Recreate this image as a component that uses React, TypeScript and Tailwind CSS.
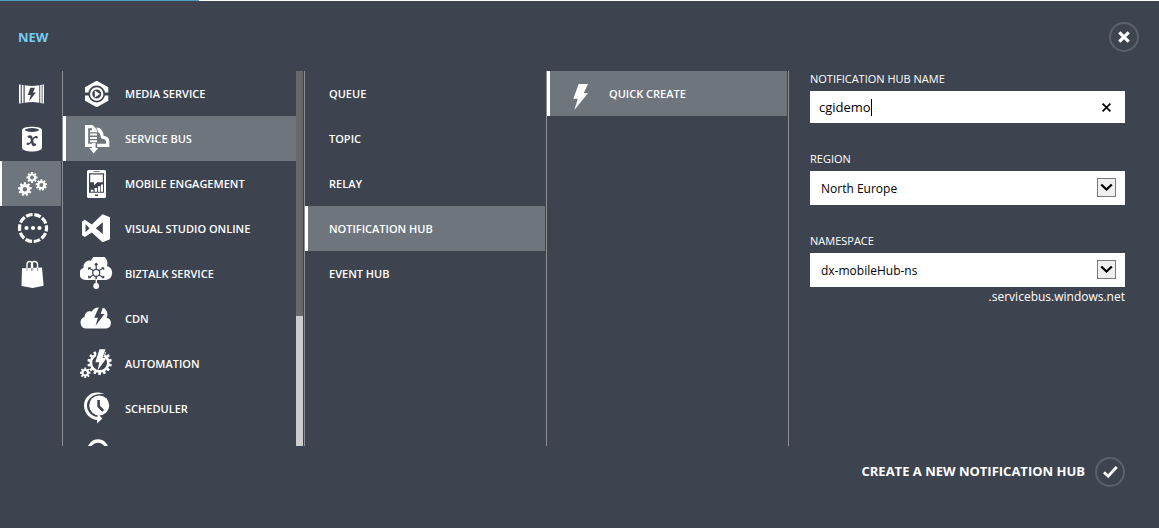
import React, { useRef, useState } from "react";

type IconProps = { children: React.ReactNode };

function ServiceIcon({ children }: IconProps) {
  return (
    <svg viewBox="0 0 33 33" className="h-[33px] w-[33px] shrink-0" fill="#fff" aria-hidden="true">
      {children}
    </svg>
  );
}

function gearPath(cx: number, cy: number, outer: number, inner: number, teeth: number, hole: number) {
  const pts: string[] = [];
  const step = (Math.PI * 2) / teeth;
  for (let i = 0; i < teeth; i++) {
    const a = i * step - Math.PI / 2;
    [
      [-0.32, inner],
      [-0.22, outer],
      [0.22, outer],
      [0.32, inner],
    ].forEach(([k, r]) => {
      pts.push(`${(cx + Math.cos(a + k * step) * r).toFixed(2)} ${(cy + Math.sin(a + k * step) * r).toFixed(2)}`);
    });
  }
  return `M${pts.join("L")}ZM${cx - hole} ${cy}a${hole} ${hole} 0 1 0 ${hole * 2} 0a${hole} ${hole} 0 1 0 ${-hole * 2} 0Z`;
}

const DARK = "#3e444f";

const mediaIcon = (
  <ServiceIcon>
    <path d="M5 15.500V10.200L16.200 4h1l11.100 6.200v5.300zM5 18.500v5.300L16.200 30h1l11.100-6.200v-5.300z" />
    <circle cx="16.700" cy="17" r="8.400" fill={DARK} />
    <circle cx="16.700" cy="17" r="5.600" fill="none" stroke="#fff" strokeWidth="2.200" />
    <path d="M14.800 13.500v7l5.200-3.500z" />
  </ServiceIcon>
);

const serviceBusIcon = (
  <ServiceIcon>
    <path d="M5 3h7.500l4 4v1.500H12V6.200H8.200v15.600H12V25H5z" />
    <path d="M10 8.300h7v2h-7zM10 11.600h7v2h-7zM10 14.900h7v2h-7zM10 18.200h7v2h-7zM12 21h3.600v5h2.600l-4.500 5.400L9.200 26H12z" />
    <path
      fillRule="evenodd"
      d="M16.500 5.500c4.400 0 6.500 3.200 7.200 8.300 3.500.8 5.600 2 5.600 5.400V25H17.200v-3.200h8.800v-2.300c0-1.800-1.600-2.300-5-3.200-.3-3.600-1.300-5.300-3-6.300z"
    />
  </ServiceIcon>
);

const mobileIcon = (
  <ServiceIcon>
    <path
      fillRule="evenodd"
      d="M8.500 3h16A1.500 1.500 0 0 1 26 4.500v25A1.500 1.500 0 0 1 24.500 31h-16A1.500 1.500 0 0 1 7 29.500v-25A1.500 1.500 0 0 1 8.500 3zM9 6.200v19.600h15V6.200zM13.500 4.200v.9h6v-.9zM15 27.600v1.500h3v-1.500z"
    />
    <path d="M10.200 7.400h12.600v7.900h-5.500l-3.300 3v-3h-3.800zM10.800 22.800h2.600v2h-2.600zM14.600 21h2.500v3.800h-2.500zM18 19.200h2.300v5.600H18zM21 17.600h2v7.200h-2z" />
  </ServiceIcon>
);

const visualStudioIcon = (
  <ServiceIcon>
    <path
      fillRule="evenodd"
      d="M22.500 2.300l7.500 3v22l-7.500 2.900-10.700-9.700L4.800 25 2 23.300V9.400l2.800-1.700 7 4.900zM22.800 10.300l-7 6 7 5.700zM5.500 12.300v8l4-4z"
    />
  </ServiceIcon>
);

const bizTalkIcon = (
  <ServiceIcon>
    <path d="M5.500 23A6.300 6.300 0 0 1 3.600 10.800 6 6 0 0 1 11 3.800 8.200 8.200 0 0 1 27 9 7.200 7.200 0 0 1 26 23z" />
    <circle cx="16.200" cy="15.800" r="3.500" fill="none" stroke={DARK} strokeWidth="1.300" />
    <path
      d="M16.200 12.300V7M13.300 13.600L9 11M19.100 13.600L23.400 11M13.300 18L9 20.500M19.100 18l4.300 2.500M14.800 8l1.400-1.600L17.600 8M8.600 12.800l.2-2 2 .1M23.800 12.800l-.2-2-2 .1M8.600 18.700l.2 2 2-.1M23.800 18.700l-.2 2-2-.1"
      stroke={DARK}
      strokeWidth="1.200"
      fill="none"
    />
    <path d="M16.200 20v3" stroke={DARK} strokeWidth="1.500" />
    <path d="M15.600 22h1.400v6h-1.400z" />
    <circle cx="16.200" cy="29" r="2.900" />
  </ServiceIcon>
);

const cdnIcon = (
  <ServiceIcon>
    <path d="M6.500 26.500A5.900 5.900 0 0 1 4.600 15a5.400 5.400 0 0 1 7.200-5.500A8 8 0 0 1 19 5.500l5.500.8a8.200 8.200 0 0 1 2.200 9.400A5.500 5.500 0 0 1 26 26.500z" />
    <path d="M19.300 4.500h3.800l-2.400 7.500h3.800L15.500 23.800l2.400-8h-3.800z" fill={DARK} />
  </ServiceIcon>
);

const automationIcon = (
  <ServiceIcon>
    <path fillRule="evenodd" d={gearPath(19.6, 15.7, 12.3, 9.9, 14, 7.4)} />
    <path fillRule="evenodd" d={gearPath(5.2, 25.8, 5.4, 3.8, 8, 1.7)} />
    <path d="M17.500 1h8.500l-2 8h-8z" fill={DARK} />
    <path d="M19.500 2.200h6l-3 8.600h4.300L17.500 23.600l1.800-8.400h-4z" />
  </ServiceIcon>
);

const schedulerIcon = (
  <ServiceIcon>
    <path d="M24.800 2.200C13-3 4 4.500 4 13.500c0 7.500 5.500 13.500 13.300 14.700L17 31.500l5.400-5-4.600-4.800-.3 3.300C11.500 24 7 19.500 7 13.500 7 6.500 13.500.5 24.800 2.200z" />
    <circle cx="19.200" cy="13.400" r="10" />
    <path d="M18.600 8v6.200l4.600 4.600" stroke={DARK} strokeWidth="2.600" fill="none" />
  </ServiceIcon>
);

const moreIcon = (
  <ServiceIcon>
    <circle cx="18" cy="13" r="9" fill="none" stroke="#fff" strokeWidth="3.400" />
  </ServiceIcon>
);

const services = [
  { label: "MEDIA SERVICE", icon: mediaIcon },
  { label: "SERVICE BUS", icon: serviceBusIcon },
  { label: "MOBILE ENGAGEMENT", icon: mobileIcon },
  { label: "VISUAL STUDIO ONLINE", icon: visualStudioIcon },
  { label: "BIZTALK SERVICE", icon: bizTalkIcon },
  { label: "CDN", icon: cdnIcon },
  { label: "AUTOMATION", icon: automationIcon },
  { label: "SCHEDULER", icon: schedulerIcon },
  { label: "", icon: moreIcon },
];

const messaging = ["QUEUE", "TOPIC", "RELAY", "NOTIFICATION HUB", "EVENT HUB"];

const categories = [
  {
    name: "Compute",
    icon: (
      <>
        <path d="M3 7.500h1.700v19H3zM5.800 7.800l1.700.2v18l-1.700.2zM8.700 8.200q7.300 1.400 14.600 0v17.600q-7.300-1.400-14.600 0zM24.200 8l1.500-.2v18.400l-1.500-.2zM26.500 7.500h1.500v19h-1.500z" />
        <path d="M14.300 10.800h4.700l-2 4.700h2.900l-6.800 8.700 1.600-6.200h-2.900z" fill={DARK} />
      </>
    ),
  },
  {
    name: "Data services",
    icon: (
      <>
        <path d="M6 8c0-4.500 20-4.500 20 0v17.800c0 5-20 5-20 0z" />
        <ellipse cx="16" cy="8" rx="7" ry="1.900" fill={DARK} />
        <path
          d="M12 15.300c2.400-1.700 3.400-.5 3.700 1.500l.9 4.800c.4 1.800 1.500 1.700 3 .2"
          fill="none"
          stroke={DARK}
          strokeWidth="2.400"
        />
        <path d="M21 14.800c-2.500-.8-3.800 1.800-5 3.900-1.200 2-2.400 4-4.700 3.300" fill="none" stroke={DARK} strokeWidth="1.400" />
        <circle cx="20.500" cy="15.300" r="1.200" fill={DARK} />
        <circle cx="11.800" cy="21.800" r="1.200" fill={DARK} />
      </>
    ),
  },
  {
    name: "App services",
    icon: (
      <>
        <path fillRule="evenodd" d={gearPath(16, 10.5, 5.6, 4.2, 8, 1.9)} />
        <path fillRule="evenodd" d={gearPath(25.4, 18, 5.8, 4.3, 9, 2)} />
        <path fillRule="evenodd" d={gearPath(8.9, 22.2, 7, 5.2, 9, 2.2)} />
      </>
    ),
  },
  {
    name: "Network services",
    icon: (
      <>
        <circle cx="17" cy="16" r="13.500" fill="none" stroke="#fff" strokeWidth="3.200" strokeDasharray="6.700 1.782" strokeDashoffset="3.300" />
        <circle cx="10.500" cy="16" r="2.100" />
        <circle cx="17" cy="16" r="2.100" />
        <circle cx="23.500" cy="16" r="2.100" />
      </>
    ),
  },
  {
    name: "Marketplace",
    icon: (
      <>
        <path d="M6 11.200l20-.6 1.600 18.200-11 2.300L5.500 29z" />
        <path d="M11 13V7.500c0-4 5.500-4 5.500 0V13M15.500 13V7.500c0-4 6-4 6 0V13" fill="none" stroke="#fff" strokeWidth="1.400" />
        <path d="M11 11v3M15.500 11v3M16.800 11v3M21.500 11v3" stroke={DARK} strokeWidth=".5" />
      </>
    ),
  },
];

const columnClass = "h-[375px] overflow-hidden border-l border-[#8b9097]";
const itemText = "text-[11px] leading-4 font-semibold text-white whitespace-nowrap";

function SelectField({ id, label, value, options }: { id: string; label: string; value: string; options: string[] }) {
  return (
    <div>
      <label htmlFor={id} className="mb-1 block text-[11px] leading-4">
        {label}
      </label>
      <div className="relative">
        <select
          id={id}
          defaultValue={value}
          className="block h-[34px] w-full appearance-none rounded-none bg-white pt-px pr-9 pl-[11px] text-xs text-black outline-none"
        >
          {options.map((o) => (
            <option key={o}>{o}</option>
          ))}
        </select>
        <span className="pointer-events-none absolute top-[7px] right-[9px] flex h-[19px] w-[19px] items-center justify-center border border-[#767a80] bg-[#efefef]">
          <svg viewBox="0 0 13 9" className="h-[9px] w-[13px]" fill="none" stroke="#000" strokeWidth="2.300" aria-hidden="true">
            <path d="M1.200 1.500l5.300 5 5.300-5" />
          </svg>
        </span>
      </div>
    </div>
  );
}

export default function App() {
  const [name, setName] = useState("cgidemo");
  const [category, setCategory] = useState(2);
  const [service, setService] = useState(1);
  const [kind, setKind] = useState(3);
  const input = useRef<HTMLInputElement>(null);

  return (
    <div className="min-h-screen bg-[#3e444f] font-['Open_Sans','Noto_Sans',sans-serif] text-white">
      <div className="flex h-px bg-white">
        <div className="w-[199px] bg-[#4f9fc3]" />
      </div>

      <header className="flex h-[70px] items-start justify-between pt-[21px] pr-5 pl-[18px]">
        <h1 className="mt-1 text-[13px] leading-[22px] font-bold text-[#75ccf2]">NEW</h1>
        <button
          type="button"
          aria-label="Close"
          className="flex h-[30px] w-[30px] items-center justify-center rounded-full border-2 border-[#5c626d]"
        >
          <svg viewBox="0 0 12 12" className="h-3 w-3" stroke="#fff" strokeWidth="3.200" aria-hidden="true">
            <path d="M1.300 1.300l9.400 9.400M10.700 1.300l-9.400 9.400" />
          </svg>
        </button>
      </header>

      <main className="grid grid-cols-[62px_242fr_242fr_242fr_371fr]">
        <nav aria-label="Categories" className="pr-px">
          {categories.map((c, i) => (
            <button
              key={c.name}
              type="button"
              aria-label={c.name}
              onClick={() => setCategory(i)}
              className={
                "flex h-[45px] w-full items-center border-l-2 pl-3.5 " +
                (i === category ? "border-white bg-[#6e757d]" : "border-transparent")
              }
            >
              <svg viewBox="0 0 33 33" className="h-[33px] w-[33px]" fill="#fff" aria-hidden="true">
                {c.icon}
              </svg>
            </button>
          ))}
        </nav>

        <div className={columnClass + " flex pr-px"}>
          <ul className="min-w-0 flex-1">
            {services.map((s, i) => (
              <li key={i}>
                <button
                  type="button"
                  aria-label={s.label || "More services"}
                  onClick={() => setService(i)}
                  className={
                    "flex h-[45px] w-full items-center gap-3 border-l-3 pl-3.5 " +
                    itemText +
                    (i === service ? " border-white bg-[#6e757d]" : " border-transparent")
                  }
                >
                  {s.icon}
                  <span>{s.label}</span>
                </button>
              </li>
            ))}
          </ul>
          <div className="w-[7px] bg-[#cdcdcd]">
            <div className="h-[245px] bg-[#696969]" />
          </div>
        </div>

        <ul className={columnClass + " pr-px"}>
          {messaging.map((m, i) => (
            <li key={m}>
              <button
                type="button"
                onClick={() => setKind(i)}
                className={
                  "flex h-[45px] w-full items-center border-l-3 pl-[21px] " +
                  itemText +
                  (i === kind ? " border-white bg-[#6e757d]" : " border-transparent")
                }
              >
                {m}
              </button>
            </li>
          ))}
        </ul>

        <div className={columnClass + " pr-px"}>
          <button
            type="button"
            className={"flex h-[45px] w-full items-center gap-3 border-l-3 border-white bg-[#6e757d] pl-3.5 " + itemText}
          >
            <ServiceIcon>
              <path d="M14.700 7h9.300l-4.300 9.300H24L10.300 33l3.500-11.200H9.300z" />
            </ServiceIcon>
            QUICK CREATE
          </button>
        </div>

        <form className={columnClass + " flex flex-col gap-7 pr-[34px] pl-[21px]"} onSubmit={(e) => e.preventDefault()}>
          <div>
            <label htmlFor="hub-name" className="mb-1 block text-[11px] leading-4">
              NOTIFICATION HUB NAME
            </label>
            <div className="flex h-8 items-center bg-white pr-3 pl-[9px] text-black">
              <input
                id="hub-name"
                ref={input}
                value={name}
                onChange={(e) => setName(e.target.value)}
                className="min-w-0 text-[13px] leading-5 caret-transparent outline-none [field-sizing:content]"
              />
              <span className="h-[17px] w-px bg-black" />
              <button
                type="button"
                aria-label="Clear"
                className="ml-auto p-[2px]"
                onClick={() => {
                  setName("");
                  input.current?.focus();
                }}
              >
                <svg viewBox="0 0 9 9" className="h-[9px] w-[9px]" stroke="#000" strokeWidth="1.700" aria-hidden="true">
                  <path d="M.6.6l7.800 7.800M8.400.6L.6 8.400" />
                </svg>
              </button>
            </div>
          </div>
          <SelectField id="region" label="REGION" value="North Europe" options={["North Europe", "West Europe"]} />
          <div>
            <SelectField id="namespace" label="NAMESPACE" value="dx-mobileHub-ns" options={["dx-mobileHub-ns"]} />
            <p className="text-right text-xs leading-5">.servicebus.windows.net</p>
          </div>
        </form>
      </main>

      <footer className="flex justify-end pt-[11px] pr-[34px]">
        <button type="button" className="flex items-center gap-2.5 text-[13px] font-bold">
          CREATE A NEW NOTIFICATION HUB
          <span className="flex h-[30px] w-[30px] items-center justify-center rounded-full border-2 border-[#5c626d]">
            <svg viewBox="0 0 15 12" className="h-3 w-[15px]" fill="none" stroke="#fff" strokeWidth="2.800" aria-hidden="true">
              <path d="M1 6.300l4.200 3.900L13.700 1" />
            </svg>
          </span>
        </button>
      </footer>
    </div>
  );
}
